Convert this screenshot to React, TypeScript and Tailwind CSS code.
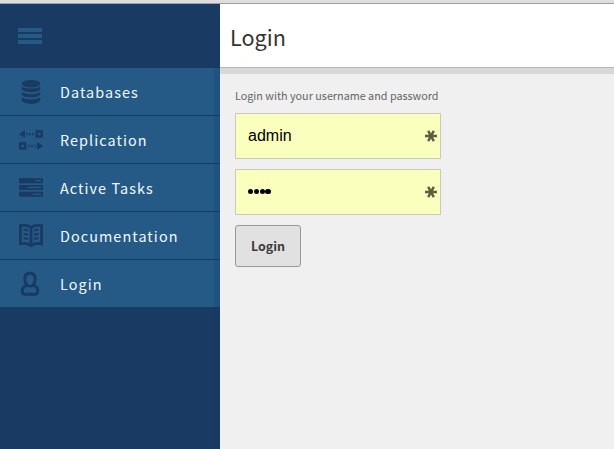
import React from "react";

const sans = "font-['Noto_Sans_CJK_SC','Noto_Sans',sans-serif]";

function DatabaseIcon() {
  return (
    <svg width="20" height="24" viewBox="0 0 20 24" fill="#193a62">
      <ellipse cx="10" cy="3.8" rx="9.2" ry="3.8" />
      <path d="M.8 6.2C3 9.4 17 9.4 19.2 6.2V9C18 13.2 2 13.2.8 9Z" />
      <path d="M.8 11.7C3 15 17 15 19.2 11.7V14.2C18 18.4 2 18.4.8 14.2Z" />
      <path d="M.8 17C3 20.3 17 20.3 19.2 17V20C18 25.2 2 25.2.8 20Z" />
    </svg>
  );
}

function ReplicationIcon() {
  return (
    <svg width="24" height="20" viewBox="0 0 24 20" fill="#193a62">
      <path d="M0 4 6 0V8ZM7 2.8h1.5v2.5H7ZM10 2.8h1.5v2.5H10ZM13 2.8h1.5v2.5H13Z" />
      <path fillRule="evenodd" d="M16.5.3H24v7.4h-7.5ZM19 2.8v2.4h2.5V2.8Z" />
      <path fillRule="evenodd" d="M0 12.3h7.5v7.4H0ZM2.5 14.8v2.4H5v-2.4Z" />
      <path d="M24 16 18 12v8ZM9.3 14.8h1.5v2.5H9.3ZM12.3 14.8h1.5v2.5h-1.5ZM15.3 14.8h1.5v2.5h-1.5Z" />
    </svg>
  );
}

function TasksIcon() {
  return (
    <svg width="24" height="20" viewBox="0 0 24 20">
      <g fill="#193a62">
        <rect y=".2" width="24" height="5" rx=".7" />
        <rect y="7" width="24" height="5" rx=".7" />
        <rect y="13.8" width="24" height="5" rx=".7" />
      </g>
      <g fill="#255986">
        <rect x="16.5" y="2" width="5.5" height="1.3" />
        <rect x="9" y="8.8" width="13" height="1.3" />
        <rect x="13.5" y="15.6" width="8.5" height="1.3" />
      </g>
    </svg>
  );
}

function BookIcon() {
  return (
    <svg width="24" height="24" viewBox="0 0 24 24" fill="none" stroke="#193a62">
      <path strokeWidth="2.8" d="M12 3.5C9.5 1.5 5.5.9 1.4 1.6V19.8C6 19 9.5 19.7 12 21.6 14.5 19.7 18 19 22.6 19.8V1.6C18.5.9 14.5 1.5 12 3.5Z" />
      <path strokeWidth="2.8" d="M12 3v18" />
      <path strokeWidth="2" d="M4.5 5.8Q7 5.5 9 6.8M4.5 10Q7 9.7 9 11M4.5 14.4Q7 14.1 9 15.4M19.5 5.8Q17 5.5 15 6.8M19.5 10Q17 9.7 15 11M19.5 14.4Q17 14.1 15 15.4" />
    </svg>
  );
}

function UserIcon() {
  return (
    <svg width="20" height="26" viewBox="0 0 20 26" fill="none" stroke="#193a62" strokeWidth="3" strokeLinejoin="round">
      <path d="M10 2.3C6.2 2.3 4.8 4.8 4.8 8c0 2.4.8 4.6 2.3 6C4.1 15 2.3 17.3 2.3 20.2c0 2 1 3 3 3h9.4c2 0 3-1 3-3 0-2.9-1.8-5.2-4.8-6.2 1.5-1.4 2.3-3.6 2.3-6 0-3.2-1.4-5.7-5.2-5.7Z" />
      <path strokeWidth="2.4" d="M6.5 14Q10 16.5 13.5 14" />
    </svg>
  );
}

function Asterisk() {
  return (
    <svg width="12" height="12" viewBox="0 0 12 12" stroke="#5c5e3f" strokeWidth="2.5">
      <path d="M0 6h12M3.2.8l5.6 10.4M8.8.8 3.2 11.2" />
    </svg>
  );
}

const items = [
  { label: "Databases", icon: <DatabaseIcon /> },
  { label: "Replication", icon: <ReplicationIcon /> },
  { label: "Active Tasks", icon: <TasksIcon /> },
  { label: "Documentation", icon: <BookIcon /> },
  { label: "Login", icon: <UserIcon /> },
];

function Sidebar() {
  return (
    <nav className="relative w-[220px] shrink-0 bg-[#193a62]">
      <div className="flex h-16 flex-col gap-0.5 pt-6 pl-[18px]">
        <div className="h-1 w-6 bg-[#255986]" />
        <div className="h-1 w-6 bg-[#255986]" />
        <div className="h-1 w-6 bg-[#255986]" />
      </div>
      <ul>
        {items.map((item) => (
          <li key={item.label} className="flex h-12 items-center border-b border-[#193a62] bg-[#255986] last:h-[47px] last:border-b-0">
            <span className="flex w-[60px] justify-center pl-[1px] [li:last-child_&]:pl-0">{item.icon}</span>
            <span className="text-[14.4px] leading-[24px] tracking-[1.07px] whitespace-nowrap text-[#f2faff]">{item.label}</span>
          </li>
        ))}
      </ul>
      <div className="absolute top-16 right-0 bottom-0 w-1.5 bg-[#193a62]/25" />
    </nav>
  );
}

function Field({ children }: { children: React.ReactNode }) {
  return (
    <div className="flex h-[46px] w-[206px] items-center justify-between border border-[#c9caba] bg-[#faffbd] pr-[3px] pl-3 font-['Liberation_Sans',Arial,sans-serif] text-base text-black">
      {children}
      <Asterisk />
    </div>
  );
}

export default function App() {
  return (
    <div className={`flex h-[449px] w-[614px] flex-col overflow-hidden bg-[#f0f0f0] ${sans}`}>
      <div className="h-1 shrink-0 border-b border-[#a0a0a0] bg-[#dedede]" />
      <div className="flex flex-1">
        <Sidebar />
        <main className="flex-1">
          <header className="h-16 border-b border-[#b8b8b8] bg-white pt-[15px] pl-2.5">
            <h1 className="text-[21.6px] leading-[36px] text-[#333]">Login</h1>
          </header>
          <div className="h-1.5 bg-[#d8d8d8]" />
          <form className="flex flex-col items-start pt-[11px] pl-[15px]">
            <p className="h-7 text-[10.8px] leading-5 whitespace-nowrap text-[#666]">Login with your username and password</p>
            <div className="flex flex-col gap-2.5">
              <Field>admin</Field>
              <Field>
                <span className="flex gap-[0.6px] pb-px">
                  <i className="size-[5.2px] rounded-full bg-black" />
                  <i className="size-[5.2px] rounded-full bg-black" />
                  <i className="size-[5.2px] rounded-full bg-black" />
                  <i className="size-[5.2px] rounded-full bg-black" />
                </span>
              </Field>
            </div>
            <button type="button" className="mt-2.5 flex h-[42px] w-[66px] items-center justify-center rounded-[3px] border border-[#999] bg-[#e1e1e1] text-[12.5px] leading-5 font-bold text-[#3a3a3a]">
              Login
            </button>
          </form>
        </main>
      </div>
    </div>
  );
}
